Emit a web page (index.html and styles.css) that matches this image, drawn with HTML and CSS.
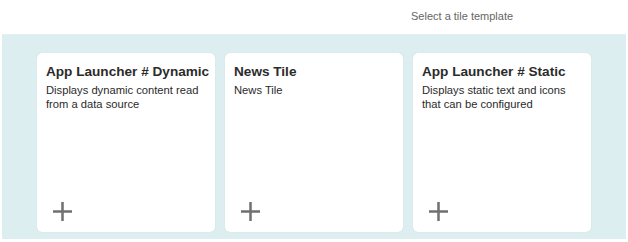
FILE: index.html
```html
<!DOCTYPE html>
<html lang="en">
<head>
  <meta charset="UTF-8" />
  <title>Select a tile template</title>
  <link rel="stylesheet" href="styles.css">
</head>
<body>

  <header class="top">
    <span>Select a tile template</span>
  </header>

  <main class="panel">
    <div class="tile">
      <h3>App Launcher # Dynamic</h3>
      <p>Displays dynamic content read from a data source</p>
      <svg class="add" viewBox="0 0 19 19" width="19" height="19">
        <rect x="0" y="8.25" width="19" height="2.5" fill="#707070"/>
        <rect x="8.25" y="0" width="2.5" height="19" fill="#707070"/>
      </svg>
    </div>
    <div class="tile">
      <h3>News Tile</h3>
      <p>News Tile</p>
      <svg class="add" viewBox="0 0 19 19" width="19" height="19">
        <rect x="0" y="8.25" width="19" height="2.5" fill="#707070"/>
        <rect x="8.25" y="0" width="2.5" height="19" fill="#707070"/>
      </svg>
    </div>
    <div class="tile">
      <h3>App Launcher # Static</h3>
      <p>Displays static text and icons that can be configured</p>
      <svg class="add" viewBox="0 0 19 19" width="19" height="19">
        <rect x="0" y="8.25" width="19" height="2.5" fill="#707070"/>
        <rect x="8.25" y="0" width="2.5" height="19" fill="#707070"/>
      </svg>
    </div>
  </main>

</body>
</html>
```

FILE: styles.css
```css
* {
  margin: 0;
  padding: 0;
  box-sizing: border-box;
}

body {
  font-family: "Liberation Sans", Arial, sans-serif;
  background: #fff;
  color: #333;
}

.top {
  height: 34px;
  padding-left: 411px;
  padding-top: 10px;
  font-size: 11px;
  color: #666;
}

.panel {
  margin: 0 2px;
  height: 205px;
  background: #ddeef1;
  border-top: 1px solid #e6eff1;
  padding: 18px 0 0 35px;
  display: flex;
  gap: 10px;
}

.tile {
  width: 178px;
  height: 179px;
  background: #fff;
  border-radius: 5px;
  box-shadow: 0 0 1px rgba(0, 0, 0, 0.15);
  padding: 11px 9px 11px 9px;
  display: flex;
  flex-direction: column;
}

.tile h3 {
  font-size: 13.6px;
  font-weight: bold;
  line-height: 15px;
  color: #2b2b2b;
  white-space: nowrap;
}

.tile p {
  margin-top: 4px;
  font-size: 11.2px;
  line-height: 14px;
  color: #2a2a2a;
}

.tile .add {
  margin-top: auto;
  margin-left: 7px;
}
```
